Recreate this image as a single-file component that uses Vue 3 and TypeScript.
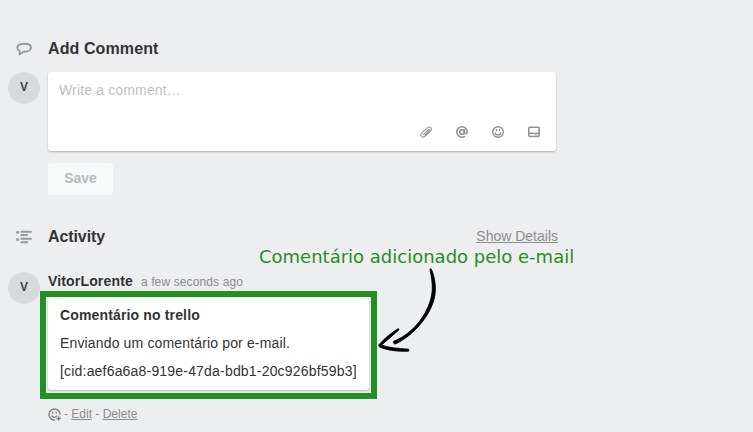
<script setup lang="ts">
interface Comment {
  author: string
  initial: string
  time: string
  title: string
  message: string
  attachment: string
}

const comment: Comment = {
  author: 'VitorLorente',
  initial: 'V',
  time: 'a few seconds ago',
  title: 'Comentário no trello',
  message: 'Enviando um comentário por e-mail.',
  attachment: '[cid:aef6a6a8-919e-47da-bdb1-20c926bf59b3]',
}
</script>

<template>
  <main class="page">
    <header class="heading">
      <svg class="heading-icon" viewBox="0 0 16 16">
        <path d="M3.5 9.7C1.9 8.9 1.1 7.7 1.3 6.3C1.7 3.9 4.9 2.7 8.5 2.7C12.3 2.7 15 4.2 15 6.5C15 9 12 10.7 8.5 10.7C7.2 10.7 6.4 11.2 5.5 12.2C4.8 12.9 4.1 13.3 3.4 13.3C3.9 12.1 3.9 10.9 3.5 9.7Z" fill="none" stroke="#999" stroke-width="1.9" stroke-linejoin="round" />
      </svg>
      <h2>Add Comment</h2>
    </header>

    <section class="row compose">
      <div class="avatar">{{ comment.initial }}</div>
      <div class="compose-main">
        <div class="editor">
          <p class="placeholder">Write a comment…</p>
          <div class="tools">
            <svg viewBox="0 0 16 16">
              <path d="M4.1 8.7L9.1 3.9C10.2 2.8 11.7 2.8 12.6 3.7C13.5 4.7 13.3 6.1 12.3 7.1L7.1 12.1C6 13.2 4.3 13.5 3.3 12.5C2.2 11.4 2.5 9.9 3.6 8.9M5.4 10.4L10.1 5.9C10.6 5.4 11.3 5.7 11.2 6.4C11.1 6.8 10.8 7.1 10.5 7.4L6.7 10.9" transform="translate(.2 -.1)" fill="none" stroke="#999" stroke-width="1.1" stroke-linecap="round" />
            </svg>
            <svg viewBox="0 0 16 16">
              <g fill="none" stroke="#919191" stroke-width="1.6">
                <circle cx="8" cy="8" r="2.3" />
                <path d="M10.4 5.3V8.6C10.4 10.3 13.2 10.3 13.2 8C13.2 4.9 10.8 2.8 8 2.8C5.1 2.8 2.8 5.1 2.8 8C2.8 10.9 5.1 13.2 8 13.2C9.2 13.2 10.2 12.9 11.1 12.3" />
              </g>
            </svg>
            <svg viewBox="0 0 16 16">
              <circle cx="8" cy="8" r="5.3" fill="none" stroke="#919191" stroke-width="1.5" />
              <path d="M6.5 5V7.2M9.5 5V7.2" stroke="#919191" stroke-width="1.4" />
              <path d="M5.3 8.8C5.8 11.6 10.2 11.6 10.7 8.8" fill="none" stroke="#919191" stroke-width="1.3" stroke-linecap="round" />
            </svg>
            <svg viewBox="0 0 16 16">
              <rect x="2.8" y="3.3" width="10.4" height="9.2" rx="1" fill="none" stroke="#919191" stroke-width="1.6" />
              <path d="M3 9.4H13" stroke="#919191" stroke-width="1.5" />
              <path d="M9 10.9H10.8M11.6 10.9H12.6" stroke="#a5a5a5" stroke-width="1.2" />
            </svg>
          </div>
        </div>
        <button class="save" type="button">Save</button>
      </div>
    </section>

    <header class="heading activity">
      <svg class="heading-icon" viewBox="0 0 16 16">
        <g stroke="#999" stroke-width="1.9" stroke-linecap="round">
          <path d="M5.3 2.7H15M5.3 6H11.2M5.3 9.8H15M5.3 13.2H11.2" />
        </g>
        <circle cx="1.6" cy="3.3" r="1.5" fill="#999" />
        <circle cx="1.6" cy="10.5" r="1.5" fill="#999" />
      </svg>
      <h2>Activity</h2>
      <a class="details">Show Details</a>
    </header>

    <article class="row entry">
      <div class="avatar">{{ comment.initial }}</div>
      <div class="entry-main">
        <div class="meta"><strong>{{ comment.author }}</strong><span>{{ comment.time }}</span></div>
        <div class="bubble">
          <h3>{{ comment.title }}</h3>
          <p>{{ comment.message }}</p>
          <p class="attachment">{{ comment.attachment }}</p>
          <div class="highlight"></div>
        </div>
        <div class="actions">
          <svg viewBox="0 0 12 12">
            <path d="M11.1 6.2A5.1 5.1 0 1 0 6.7 11.1" fill="none" stroke="#808689" stroke-width="1.4" />
            <path d="M4.4 3.3V5.2M7.6 3.3V5.2" stroke="#808689" stroke-width="1.3" />
            <path d="M3.5 6.9C4 9 7.4 9.2 8.2 7" fill="none" stroke="#808689" stroke-width="1.3" />
            <path d="M9.8 7.6V11.8M7.7 9.7H11.9" stroke="#808689" stroke-width="1.5" />
          </svg>
          <span>- <a>Edit</a> - <a>Delete</a></span>
        </div>
      </div>
    </article>

    <div class="note">Comentário adicionado pelo e-mail</div>
    <svg class="arrow" viewBox="0 0 34 86" fill="#000" stroke="#000" stroke-width=".9" stroke-linejoin="round">
      <path d="M53.4 1.2C55.8 7 57.8 15 57.3 23C56.4 43 38 66 17.8 75.8C15.8 76.6 14.4 73.6 16.2 73C36 65.5 52.5 43 54.2 23C54.7 15.5 53.4 8 52 2C51.8 .6 52.9 .1 53.4 1.2Z" />
      <path d="M20.8 62L3 77.6C2 78.8.6 77.4 1.5 76.2C6.8 70 13 65.3 19.5 61C20.5 60.5 21.4 61.3 20.8 62Z" />
      <path d="M2 76.4C10.5 80 20 80.2 30.3 81.2C31.3 81.5 31.3 83 30.3 83.2C20 83.5 9.6 82.6 1.8 79C.2 78.2.7 75.8 2 76.4Z" />
    </svg>
  </main>
</template>

<style>
body {
  background: #edeef0;
}
</style>

<style scoped>
.page {
  position: relative;
  box-sizing: border-box;
  width: 753px;
  height: 432px;
  padding: 38px 0 0 8px;
  overflow: hidden;
  background: #edeef0;
  color: #333;
  font-family: "Liberation Sans", Arial, sans-serif;
  font-size: 14px;
}
h2, h3, p {
  margin: 0;
}
.heading {
  display: flex;
  align-items: center;
  width: 550px;
  height: 20px;
}
.heading-icon {
  width: 16px;
  height: 16px;
  margin: 1px 16px 0 8px;
}
h2 {
  padding-top: 2px;
  font-size: 16px;
  line-height: 20px;
  letter-spacing: .1px;
}
.activity h2 {
  letter-spacing: -.1px;
}
.row {
  display: flex;
  gap: 8px;
}
.avatar {
  flex: none;
  width: 32px;
  height: 32px;
  border-radius: 50%;
  background: #d6dadc;
  color: #444;
  font-size: 12px;
  font-weight: 700;
  line-height: 30px;
  text-align: center;
}
.compose {
  margin-top: 14px;
}
.editor {
  display: flex;
  flex-direction: column;
  justify-content: space-between;
  box-sizing: border-box;
  width: 508px;
  height: 79px;
  padding: 9px 14px 11px 11px;
  border-radius: 3px;
  background: #fff;
  box-shadow: 0 1px 2px rgba(0, 0, 0, .25);
}
.placeholder {
  color: #bfbfbf;
  line-height: 18px;
  letter-spacing: .15px;
}
.tools {
  display: flex;
  justify-content: flex-end;
  gap: 20px;
}
.tools svg {
  width: 16px;
  height: 16px;
}
.save {
  display: block;
  width: 65px;
  height: 32px;
  margin-top: 12px;
  padding: 0 0 2px;
  border: 0;
  border-radius: 3px;
  background: #f8f9f9;
  color: #b6bbbf;
  font: bold 14px "Liberation Sans", Arial, sans-serif;
}
.activity {
  margin-top: 31px;
}
.details {
  margin-left: auto;
  color: #8c8c8c;
  text-decoration: underline;
}
.entry {
  margin-top: 26px;
}
.meta {
  height: 18px;
  line-height: 18px;
}
.meta strong {
  letter-spacing: .16px;
}
.meta span {
  margin-left: 8px;
  color: #8c8c8c;
  font-size: 12px;
  letter-spacing: .12px;
}
.bubble {
  position: relative;
  box-sizing: border-box;
  width: 321px;
  height: 92px;
  margin-top: 8px;
  padding: 8px 12px;
  border-radius: 3px;
  background: #fff;
  box-shadow: 0 1px 2px rgba(0, 0, 0, .25);
}
h3, .bubble p {
  font-size: 14px;
  line-height: 18px;
  letter-spacing: .15px;
  white-space: nowrap;
}
.bubble p {
  margin-top: 10px;
}
.bubble .attachment {
  letter-spacing: .19px;
}
.highlight {
  position: absolute;
  inset: -7px -8px -9px -8px;
  border: 6px solid #239023;
}
.actions {
  display: flex;
  align-items: center;
  height: 18px;
  margin-top: 15px;
  color: #8c8c8c;
  font-size: 12px;
}
.actions svg {
  width: 13px;
  height: 13px;
  margin-right: 3px;
}
.actions a {
  text-decoration: underline;
}
.note {
  position: absolute;
  left: 259px;
  top: 245px;
  color: #239023;
  font: 18px/24px "DejaVu Sans", sans-serif;
  white-space: nowrap;
}
.arrow {
  position: absolute;
  left: 378px;
  top: 268px;
  width: 34px;
  height: 86px;
  overflow: visible;
}
</style>
